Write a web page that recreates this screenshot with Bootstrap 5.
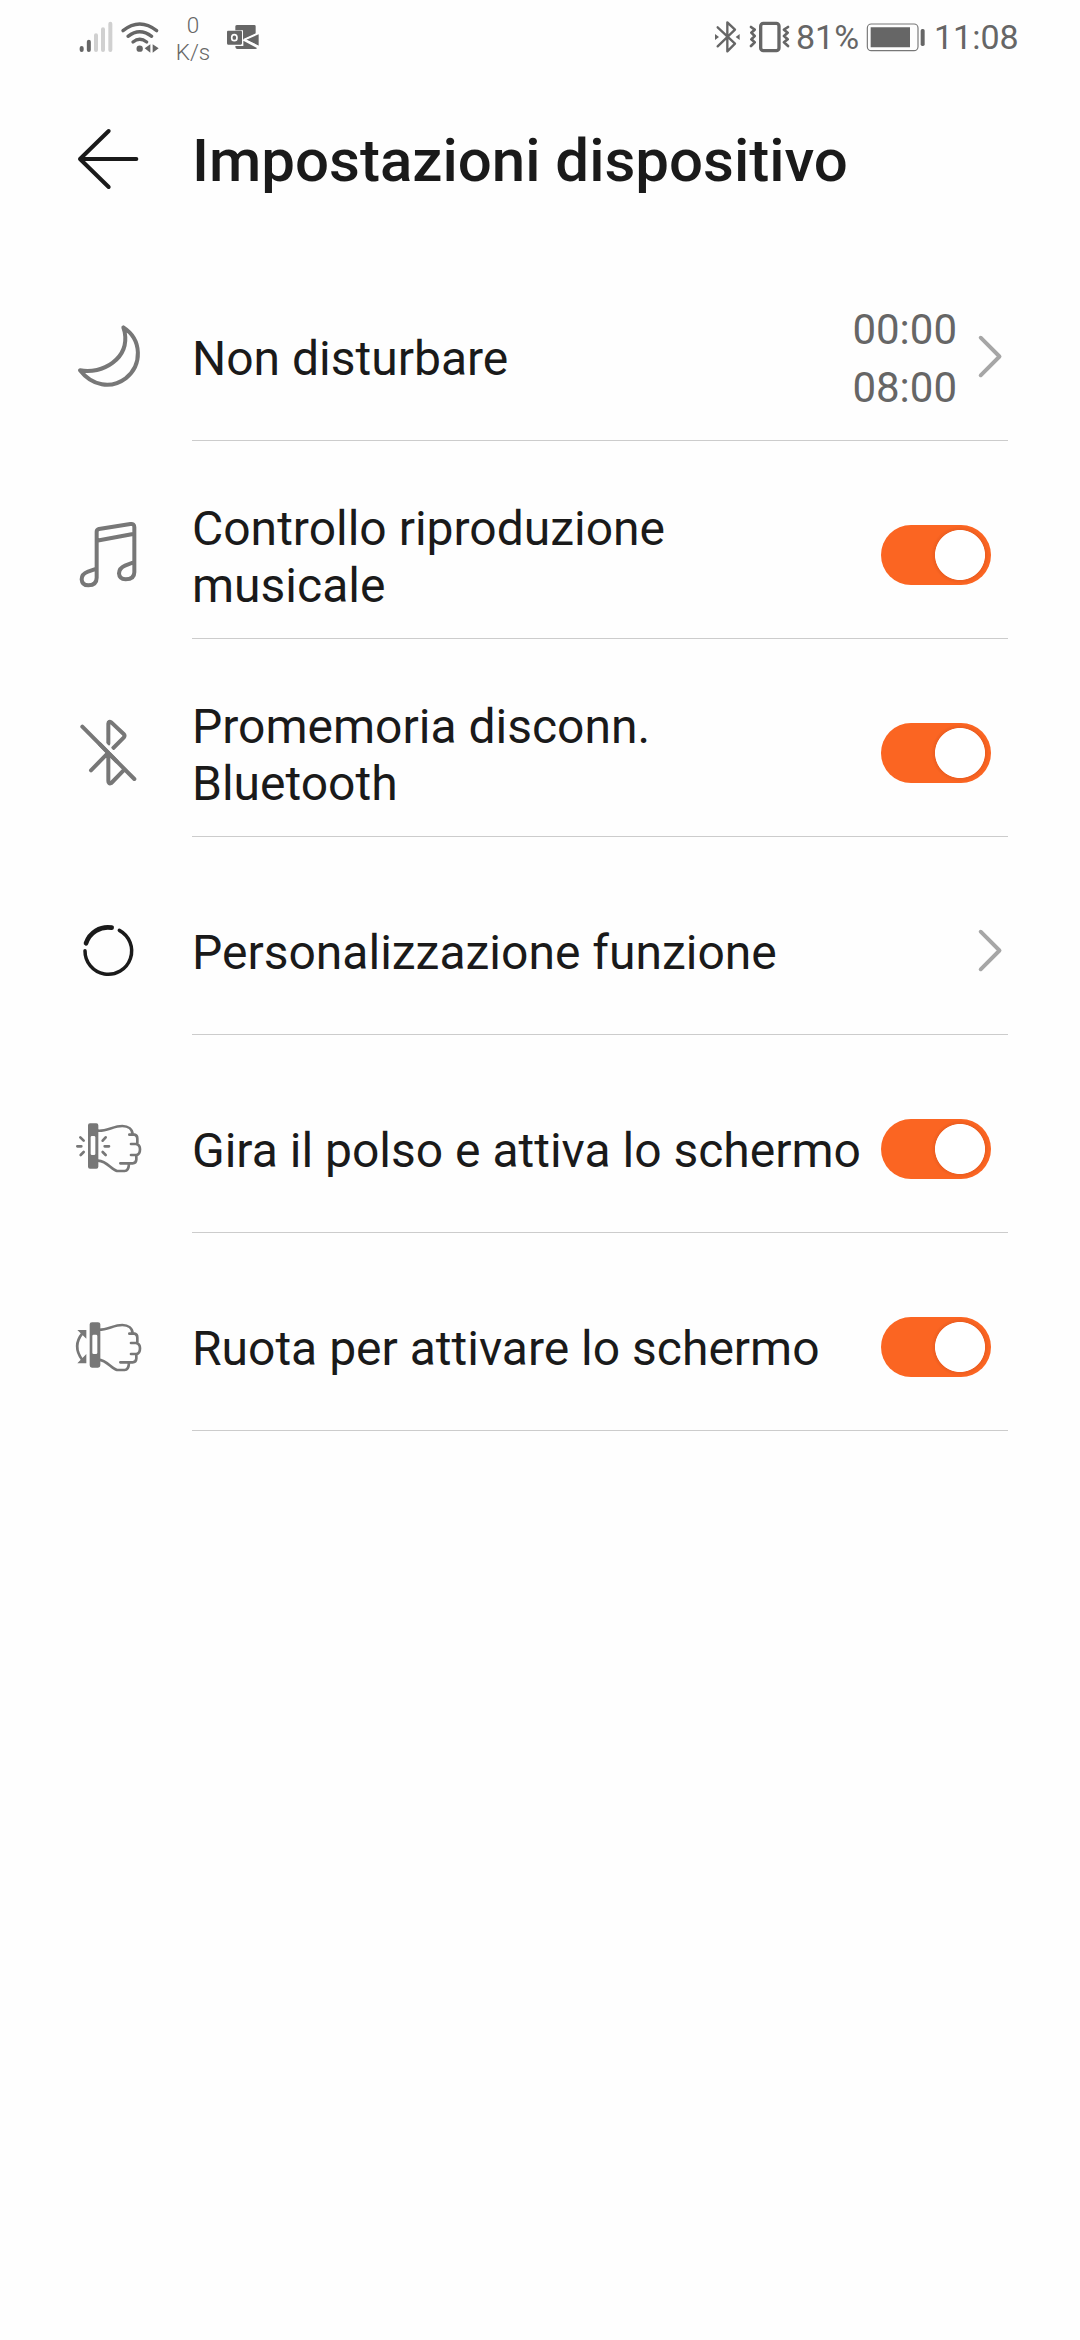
<!DOCTYPE html>
<html lang="it">
<head>
<meta charset="utf-8">
<meta name="viewport" content="width=device-width, initial-scale=1">
<title>Impostazioni dispositivo</title>
<link href="https://cdn.jsdelivr.net/npm/bootstrap@5.3.0/dist/css/bootstrap.min.css" rel="stylesheet">
<style>
body{font-family:Roboto,sans-serif;background:#fefefe;color:#1a1a1a;min-height:2340px}
svg{display:block;flex:none}
.status{height:80px;padding-left:60px;padding-right:61px;color:#666;font-size:34px;line-height:75px}
.rate{width:66px;margin-right:-2px;padding-top:12px;font-size:22.5px;font-weight:300;line-height:27px}
.pct{width:66px;padding-left:3px}
.clock{width:85px}
.topbar{height:163px;padding-left:60px}
.topbar h1{font-size:60px;font-weight:500;line-height:70px;padding-top:46px;white-space:nowrap}
.setting{height:198px;padding-left:60px;padding-right:72px}
.glyph{padding-top:57px;width:132px;flex:none}
.body-line{border-bottom:1px solid #ccc;padding-top:27px;padding-right:17px}
.name{font-size:48px;line-height:57px;padding-top:8px;white-space:nowrap}
.name.single{padding-top:6px}
.times{font-size:42px;line-height:58px;color:#666;margin-right:18px;padding-top:7px}
.chev{margin-right:-18px;margin-top:2px}
.form-switch.toggle{padding:0;margin:0 0 0 auto;min-height:0;line-height:0}
.form-switch.toggle .form-check-input{width:110px;height:60px;margin:3px 0 0;float:none;border:0;background-color:#fb6522;background-size:60px 60px;background-image:radial-gradient(circle at 29px 30px,#fff 24.6px,#ed5e20 25.4px,#fb6522 29px);background-repeat:no-repeat;background-position:right center}
.grey{fill:none;stroke:#777;stroke-width:12;stroke-linecap:round;stroke-linejoin:round}
</style>
<script src="https://cdn.jsdelivr.net/npm/bootstrap@5.3.0/dist/js/bootstrap.bundle.min.js"></script>
</head>
<body>
<svg width="0" height="0" class="position-absolute" aria-hidden="true">
<defs>
<path id="fist" fill="none" stroke="#777" stroke-width="8" stroke-linecap="round" stroke-linejoin="round" d="M114 92C140 94 160 78 187 78C205 78 217 88 218 103M208 104H224Q232 106 232 116V132M213 132H228Q240 134 240 148Q240 164 229 165H213M229 165V179Q228 190 218 190H181M207 191Q206 213 194 213H171C153 208 142 184 114 182"/>
<path id="chevron" fill="none" stroke="#a6a6a6" stroke-width="3.900" stroke-linecap="round" stroke-linejoin="round" d="M5.700 7.700L24.500 26.500L5.700 45.300"/>
</defs>
</svg>

<header class="status d-flex">
  <svg width="100" height="80" viewBox="0 0 300 240">
    <g stroke-width="12" stroke-linecap="round" fill="none">
      <path stroke="#666" d="M65 144V150M86.500 125V150"/>
      <path stroke="#d0d0d0" d="M108 106V150M129 88V150M151 71V150"/>
      <path stroke="#666" stroke-width="10" d="M189 92Q239 52 290 92M204 109Q239 81 275 109M219 126Q239 110 260 126"/>
    </g>
    <circle cx="239" cy="146" r="9.500" fill="#666"/>
    <path fill="#666" d="M254 145L271 133V158ZM278 133L296 145L278 158Z"/>
  </svg>
  <div class="rate text-center">0<br>K/s</div>
  <svg width="40" height="80" viewBox="492 0 120 240">
    <path fill="#666" d="M532 75H583Q587 75 587 79V102L549 119V91H526V79Q526 75 532 75ZM504 92H542Q546 92 546 96V130Q546 134 542 134H504Q501 134 501 130V96Q501 92 504 92ZM526 138H550V122L591 144Q590 147 586 147H532Q526 147 526 138ZM559 119L596 103V137Z"/>
    <path d="M551 117L596 140M551 119L590 101" stroke="#fefefe" stroke-width="4"/>
    <ellipse cx="523" cy="113" rx="8" ry="9" fill="none" stroke="#fefefe" stroke-width="5"/>
  </svg>
  <svg class="ms-auto" width="93" height="80" viewBox="0 0 279 240">
    <path fill="none" stroke="#666" stroke-width="7" stroke-linejoin="round" stroke-linecap="round" d="M53 82L105 131L82 154V67L105 89L53 139"/>
    <path fill="#666" d="M45 102L57 111L45 120ZM119 102L107 111L119 120Z"/>
    <rect x="182" y="70" width="55" height="82" rx="8" fill="none" stroke="#666" stroke-width="10"/>
    <path fill="none" stroke="#666" stroke-width="8" stroke-linecap="round" stroke-linejoin="round" d="M153 81L164 89L154 98L164 108L154 118L164 127L153 138M264 81L252 89L263 98L252 108L263 118L252 127L264 138"/>
  </svg>
  <div class="pct">81%</div>
  <svg width="75" height="80" viewBox="477 0 225 240">
    <rect x="502" y="72" width="152" height="80" rx="12" fill="none" stroke="#777" stroke-width="3.500"/>
    <path fill="#666" d="M512 82H630V142H512Z"/>
    <rect x="662" y="87" width="12" height="51" rx="5" fill="#666"/>
  </svg>
  <div class="clock text-nowrap">11:08</div>
</header>

<div class="topbar d-flex">
  <svg width="132" height="120" viewBox="0 -90 396 360">
    <path fill="none" stroke="#1a1a1a" stroke-width="12" stroke-linecap="round" stroke-linejoin="round" d="M146 63L60 147L146 231M60 147H229"/>
  </svg>
  <h1 class="m-0">Impostazioni dispositivo</h1>
</div>

<main>
  <section class="setting d-flex">
    <div class="glyph"><svg width="120" height="110" viewBox="0 0 360 330"><path class="grey" d="M190 82C247 119 247 195 197 235C153 268 96 258 60 211C126 224 209 177 194 96Z"/></svg></div>
    <div class="body-line d-flex align-items-center flex-grow-1">
      <div class="name single">Non disturbare</div>
      <div class="times ms-auto">00:00<br>08:00</div>
      <svg class="chev" width="34" height="53" viewBox="0 0 34 53"><use href="#chevron"/></svg>
    </div>
  </section>
  <section class="setting d-flex">
    <div class="glyph"><svg width="120" height="110" viewBox="0 -6 360 330"><path class="grey" d="M110 209V95Q110 89 117 87L211 72Q223 70 223 82V217Q223 238 197 238Q178 237 177 220Q178 204 195 197L223 186M110 122L223 101M110 206L84 215Q65 222 65 238Q66 256 85 256Q110 255 110 233V206"/></svg></div>
    <div class="body-line d-flex align-items-center flex-grow-1">
      <div class="name">Controllo riproduzione<br>musicale</div>
      <div class="form-check form-switch toggle"><input class="form-check-input" type="checkbox" role="switch" aria-label="Controllo riproduzione musicale" checked></div>
    </div>
  </section>
  <section class="setting d-flex">
    <div class="glyph"><svg width="120" height="110" viewBox="0 -12 360 330"><path class="grey" d="M67 80L223 237M145 131V71Q146 62 154 67L191 102Q196 107 191 113L160 144M93 211L145 158V243Q145 253 154 249L190 212"/><path stroke="#fefefe" stroke-width="6" d="M134 129L166 161"/><path class="grey" d="M120 133L170 184"/></svg></div>
    <div class="body-line d-flex align-items-center flex-grow-1">
      <div class="name">Promemoria disconn.<br>Bluetooth</div>
      <div class="form-check form-switch toggle"><input class="form-check-input" type="checkbox" role="switch" aria-label="Promemoria disconn. Bluetooth" checked></div>
    </div>
  </section>
  <section class="setting d-flex">
    <div class="glyph"><svg width="120" height="110" viewBox="0 -18 360 330"><g fill="none" stroke="#1a1a1a" stroke-linecap="round"><path stroke-width="14" d="M78 130A69 69 0 0 1 155 83"/><path stroke-width="10.500" d="M178 91A70 70 0 1 1 75 152"/></g></svg></div>
    <div class="body-line d-flex align-items-center flex-grow-1">
      <div class="name single">Personalizzazione funzione</div>
      <svg class="chev ms-auto" width="34" height="53" viewBox="0 0 34 53"><use href="#chevron"/></svg>
    </div>
  </section>
  <section class="setting d-flex">
    <div class="glyph"><svg width="120" height="110" viewBox="0 -24 360 330"><use href="#fist"/><path fill="#777" fill-rule="evenodd" d="M90 70H109Q115 70 115 76V200Q115 206 109 206H90Q84 206 84 200V76Q84 70 90 70ZM96 108Q92 108 92 112V161Q92 165 96 165H102Q106 165 106 161V112Q106 108 102 108Z"/><path class="grey" style="stroke-width:8" d="M61 112L71 122M52 139H64M62 165L71 156M128 122L137 112M134 139H147M128 156L137 165"/></svg></div>
    <div class="body-line d-flex align-items-center flex-grow-1">
      <div class="name single">Gira il polso e attiva lo schermo</div>
      <div class="form-check form-switch toggle"><input class="form-check-input" type="checkbox" role="switch" aria-label="Gira il polso e attiva lo schermo" checked></div>
    </div>
  </section>
  <section class="setting d-flex">
    <div class="glyph"><svg width="120" height="110" viewBox="0 -30 360 330"><use href="#fist" y="-3"/><path fill="#777" fill-rule="evenodd" d="M96 67H114Q121 67 121 73V196Q121 203 114 203H96Q89 203 89 196V73Q89 67 96 67ZM101 104Q97 104 97 108V158Q97 162 101 162H108Q112 162 112 158V108Q112 104 108 104Z"/><path class="grey" style="stroke-width:8" d="M67 100Q36 138 67 180"/><path fill="#777" d="M52 90H79V116ZM52 190H79V162Z"/></svg></div>
    <div class="body-line d-flex align-items-center flex-grow-1">
      <div class="name single">Ruota per attivare lo schermo</div>
      <div class="form-check form-switch toggle"><input class="form-check-input" type="checkbox" role="switch" aria-label="Ruota per attivare lo schermo" checked></div>
    </div>
  </section>
</main>
</body>
</html>
